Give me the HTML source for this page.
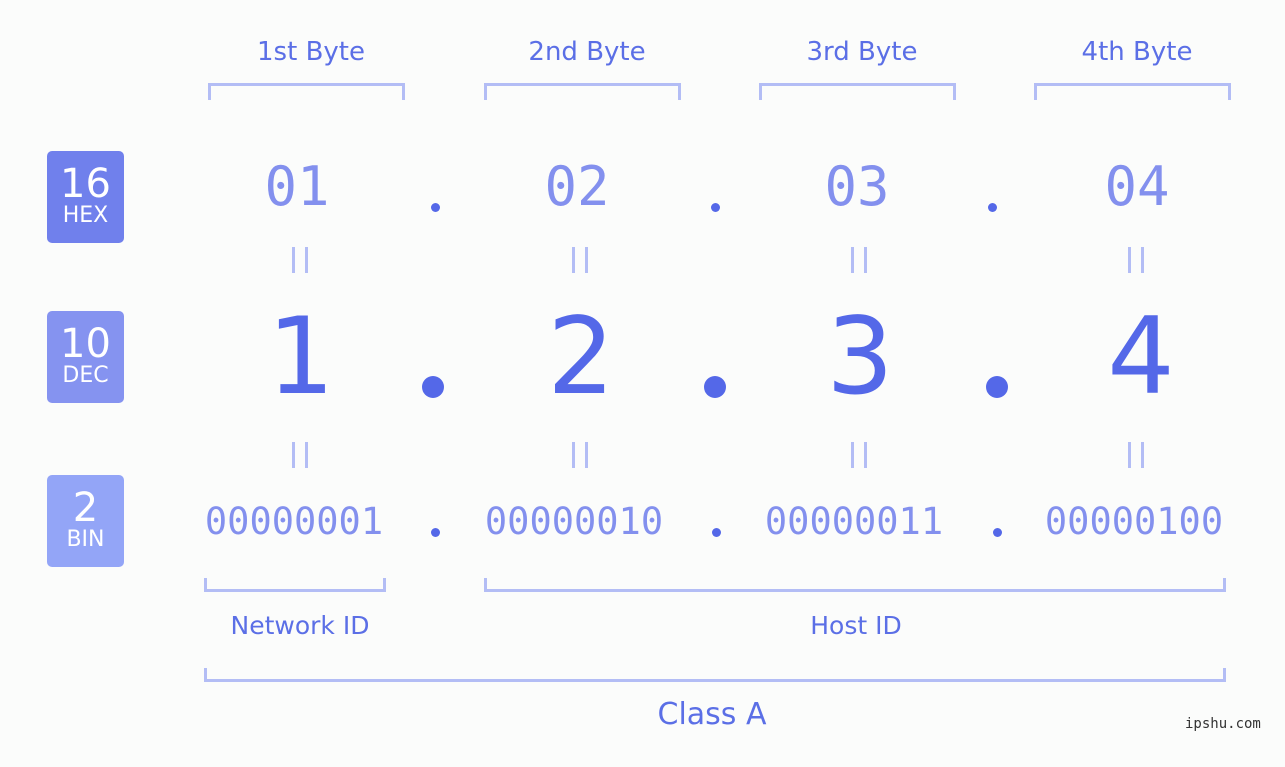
<!DOCTYPE html><html><head><style>
body{margin:0;width:1285px;height:767px;background:#fbfcfb;position:relative;overflow:hidden;font-family:"DejaVu Sans","Liberation Sans",sans-serif}
.a{position:absolute}
.c{position:absolute;transform:translateX(-50%);white-space:nowrap}
.lbl{color:#5b6fe6;font-size:26px}
.br{position:absolute;border:3px solid #b3bdf5;border-bottom:none;height:14px}
.bb{position:absolute;border:3px solid #b3bdf5;border-top:none;height:11px}
.badge{position:absolute;left:47px;width:77px;height:92px;border-radius:5px;color:#fff;text-align:center}
.badge .n{font-size:40px;line-height:40px;margin-top:13px}
.badge .t{font-size:22px;line-height:24px}
.hex{color:#8390ee;font-family:"DejaVu Sans Mono",monospace;font-size:54px}
.bin{color:#8390ee;font-family:"DejaVu Sans Mono",monospace;font-size:37px}
.dec{color:#5468e8;font-size:106px}
.eq{position:absolute;width:16px;height:26px;border-left:3px solid #b3bdf5;border-right:3px solid #b3bdf5;box-sizing:border-box}
.dot{position:absolute;background:#5468e8;border-radius:50%}
</style></head><body>
<div class="c lbl" style="left:311px;top:37px">1st Byte</div>
<div class="c lbl" style="left:587px;top:37px">2nd Byte</div>
<div class="c lbl" style="left:862px;top:37px">3rd Byte</div>
<div class="c lbl" style="left:1137px;top:37px">4th Byte</div>
<div class="br" style="left:208px;top:83px;width:191px"></div>
<div class="br" style="left:484px;top:83px;width:191px"></div>
<div class="br" style="left:759px;top:83px;width:191px"></div>
<div class="br" style="left:1034px;top:83px;width:191px"></div>

<div class="badge" style="top:151px;background:#7080ec"><div class="n">16</div><div class="t">HEX</div></div>
<div class="badge" style="top:311px;background:#8593f0"><div class="n">10</div><div class="t">DEC</div></div>
<div class="badge" style="top:475px;background:#93a5f7"><div class="n">2</div><div class="t">BIN</div></div>

<div class="c hex" style="left:297px;top:155px">01</div>
<div class="c hex" style="left:577px;top:155px">02</div>
<div class="c hex" style="left:857px;top:155px">03</div>
<div class="c hex" style="left:1137px;top:155px">04</div>
<div class="dot" style="left:431px;top:203px;width:9px;height:9px"></div>
<div class="dot" style="left:711px;top:203px;width:9px;height:9px"></div>
<div class="dot" style="left:988px;top:203px;width:9px;height:9px"></div>

<div class="eq" style="left:292px;top:247px"></div><div class="eq" style="left:572px;top:247px"></div><div class="eq" style="left:851px;top:247px"></div><div class="eq" style="left:1128px;top:247px"></div>

<div class="c dec" style="left:301px;top:295px">1</div>
<div class="c dec" style="left:581px;top:295px">2</div>
<div class="c dec" style="left:860px;top:295px">3</div>
<div class="c dec" style="left:1141px;top:295px">4</div>
<div class="dot" style="left:422px;top:376px;width:22px;height:22px"></div>
<div class="dot" style="left:704px;top:376px;width:22px;height:22px"></div>
<div class="dot" style="left:986px;top:376px;width:22px;height:22px"></div>

<div class="eq" style="left:292px;top:442px"></div><div class="eq" style="left:572px;top:442px"></div><div class="eq" style="left:851px;top:442px"></div><div class="eq" style="left:1128px;top:442px"></div>

<div class="c bin" style="left:294px;top:500px">00000001</div>
<div class="c bin" style="left:574px;top:500px">00000010</div>
<div class="c bin" style="left:854px;top:500px">00000011</div>
<div class="c bin" style="left:1134px;top:500px">00000100</div>
<div class="dot" style="left:431px;top:528px;width:9px;height:9px"></div>
<div class="dot" style="left:712px;top:528px;width:9px;height:9px"></div>
<div class="dot" style="left:993px;top:528px;width:9px;height:9px"></div>

<div class="bb" style="left:204px;top:578px;width:176px"></div>
<div class="bb" style="left:484px;top:578px;width:736px"></div>
<div class="c lbl" style="left:300px;top:611px;font-size:25px">Network ID</div>
<div class="c lbl" style="left:856px;top:611px;font-size:25px">Host ID</div>
<div class="bb" style="left:204px;top:668px;width:1016px"></div>
<div class="c lbl" style="left:712px;top:697px;font-size:30px">Class A</div>
<div class="a" style="left:1185px;top:716px;font-family:'DejaVu Sans Mono',monospace;font-size:14px;color:#333">ipshu.com</div>
</body></html>
